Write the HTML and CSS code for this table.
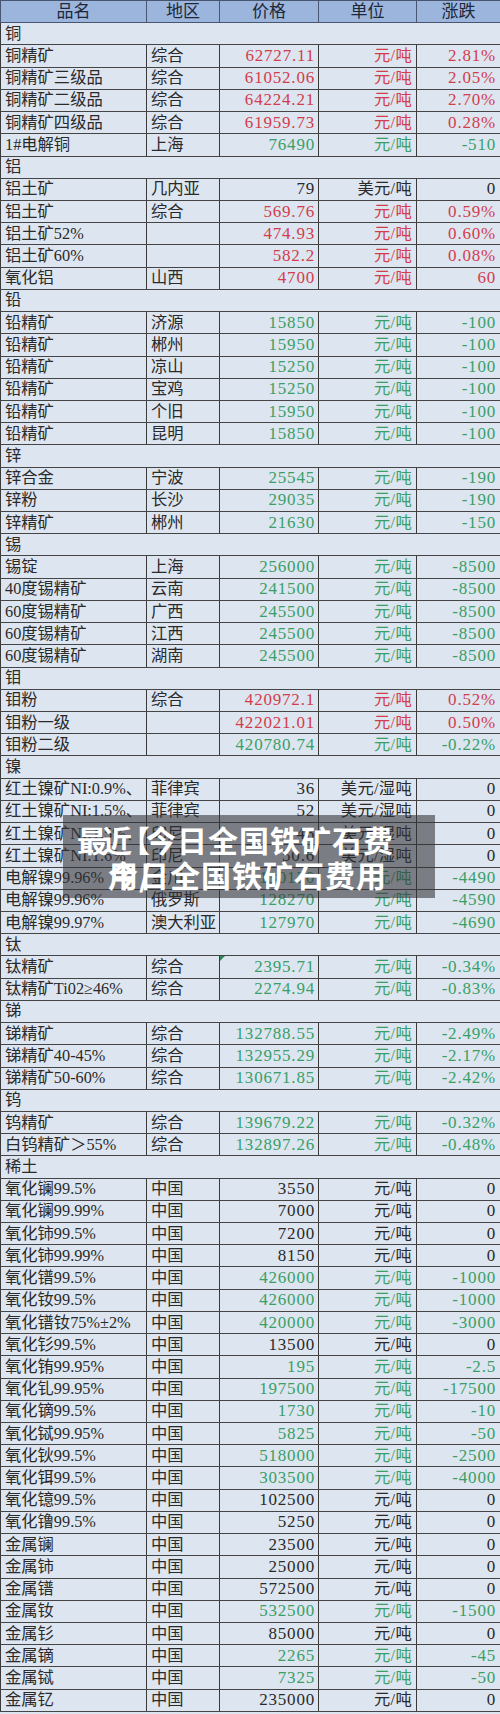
FILE: index.html
```html
<!DOCTYPE html>
<html lang="zh-CN">
<head>
<meta charset="utf-8">
<title>有色金属价格表</title>
<link rel="stylesheet" href="styles.css">
</head>
<body>
<div class="page">
<table class="prices">
<colgroup><col class="c1"><col class="c2"><col class="c3"><col class="c4"><col class="c5"></colgroup>
<thead>
<tr><th>品名</th><th>地区</th><th>价格</th><th>单位</th><th>涨跌</th></tr>
</thead>
<tbody>
<tr class="g"><td colspan="5">铜</td></tr>
<tr class="r"><td>铜精矿</td><td>综合</td><td class="n">62727.11</td><td class="u">元/吨</td><td class="n">2.81%</td></tr>
<tr class="r"><td>铜精矿三级品</td><td>综合</td><td class="n">61052.06</td><td class="u">元/吨</td><td class="n">2.05%</td></tr>
<tr class="r"><td>铜精矿二级品</td><td>综合</td><td class="n">64224.21</td><td class="u">元/吨</td><td class="n">2.70%</td></tr>
<tr class="r"><td>铜精矿四级品</td><td>综合</td><td class="n">61959.73</td><td class="u">元/吨</td><td class="n">0.28%</td></tr>
<tr class="d"><td>1#电解铜</td><td>上海</td><td class="n">76490</td><td class="u">元/吨</td><td class="n">-510</td></tr>
<tr class="g"><td colspan="5">铝</td></tr>
<tr><td>铝土矿</td><td>几内亚</td><td class="n">79</td><td class="u">美元/吨</td><td class="n">0</td></tr>
<tr class="r"><td>铝土矿</td><td>综合</td><td class="n">569.76</td><td class="u">元/吨</td><td class="n">0.59%</td></tr>
<tr class="r"><td>铝土矿52%</td><td></td><td class="n">474.93</td><td class="u">元/吨</td><td class="n">0.60%</td></tr>
<tr class="r"><td>铝土矿60%</td><td></td><td class="n">582.2</td><td class="u">元/吨</td><td class="n">0.08%</td></tr>
<tr class="r"><td>氧化铝</td><td>山西</td><td class="n">4700</td><td class="u">元/吨</td><td class="n">60</td></tr>
<tr class="g"><td colspan="5">铅</td></tr>
<tr class="d"><td>铅精矿</td><td>济源</td><td class="n">15850</td><td class="u">元/吨</td><td class="n">-100</td></tr>
<tr class="d"><td>铅精矿</td><td>郴州</td><td class="n">15950</td><td class="u">元/吨</td><td class="n">-100</td></tr>
<tr class="d"><td>铅精矿</td><td>凉山</td><td class="n">15250</td><td class="u">元/吨</td><td class="n">-100</td></tr>
<tr class="d"><td>铅精矿</td><td>宝鸡</td><td class="n">15250</td><td class="u">元/吨</td><td class="n">-100</td></tr>
<tr class="d"><td>铅精矿</td><td>个旧</td><td class="n">15950</td><td class="u">元/吨</td><td class="n">-100</td></tr>
<tr class="d"><td>铅精矿</td><td>昆明</td><td class="n">15850</td><td class="u">元/吨</td><td class="n">-100</td></tr>
<tr class="g"><td colspan="5">锌</td></tr>
<tr class="d"><td>锌合金</td><td>宁波</td><td class="n">25545</td><td class="u">元/吨</td><td class="n">-190</td></tr>
<tr class="d"><td>锌粉</td><td>长沙</td><td class="n">29035</td><td class="u">元/吨</td><td class="n">-190</td></tr>
<tr class="d"><td>锌精矿</td><td>郴州</td><td class="n">21630</td><td class="u">元/吨</td><td class="n">-150</td></tr>
<tr class="g"><td colspan="5">锡</td></tr>
<tr class="d"><td>锡锭</td><td>上海</td><td class="n">256000</td><td class="u">元/吨</td><td class="n">-8500</td></tr>
<tr class="d"><td>40度锡精矿</td><td>云南</td><td class="n">241500</td><td class="u">元/吨</td><td class="n">-8500</td></tr>
<tr class="d"><td>60度锡精矿</td><td>广西</td><td class="n">245500</td><td class="u">元/吨</td><td class="n">-8500</td></tr>
<tr class="d"><td>60度锡精矿</td><td>江西</td><td class="n">245500</td><td class="u">元/吨</td><td class="n">-8500</td></tr>
<tr class="d"><td>60度锡精矿</td><td>湖南</td><td class="n">245500</td><td class="u">元/吨</td><td class="n">-8500</td></tr>
<tr class="g"><td colspan="5">钼</td></tr>
<tr class="r"><td>钼粉</td><td>综合</td><td class="n">420972.1</td><td class="u">元/吨</td><td class="n">0.52%</td></tr>
<tr class="r"><td>钼粉一级</td><td></td><td class="n">422021.01</td><td class="u">元/吨</td><td class="n">0.50%</td></tr>
<tr class="d"><td>钼粉二级</td><td></td><td class="n">420780.74</td><td class="u">元/吨</td><td class="n">-0.22%</td></tr>
<tr class="g"><td colspan="5">镍</td></tr>
<tr><td>红土镍矿NI:0.9%、</td><td>菲律宾</td><td class="n">36</td><td class="u">美元/湿吨</td><td class="n">0</td></tr>
<tr><td>红土镍矿NI:1.5%、</td><td>菲律宾</td><td class="n">52</td><td class="u">美元/湿吨</td><td class="n">0</td></tr>
<tr><td>红土镍矿NI:1.5%、</td><td>印尼</td><td class="n">46</td><td class="u">美元/湿吨</td><td class="n">0</td></tr>
<tr><td>红土镍矿NI:1.6%</td><td>印尼</td><td class="n">50.6</td><td class="u">美元/湿吨</td><td class="n">0</td></tr>
<tr class="d"><td>电解镍99.96%</td><td>金川</td><td class="n">130120</td><td class="u">元/吨</td><td class="n">-4490</td></tr>
<tr class="d"><td>电解镍99.96%</td><td>俄罗斯</td><td class="n">128270</td><td class="u">元/吨</td><td class="n">-4590</td></tr>
<tr class="d"><td>电解镍99.97%</td><td>澳大利亚</td><td class="n">127970</td><td class="u">元/吨</td><td class="n">-4690</td></tr>
<tr class="g"><td colspan="5">钛</td></tr>
<tr class="d"><td>钛精矿</td><td>综合</td><td class="n flag">2395.71</td><td class="u">元/吨</td><td class="n">-0.34%</td></tr>
<tr class="d"><td>钛精矿Ti02≥46%</td><td>综合</td><td class="n">2274.94</td><td class="u">元/吨</td><td class="n">-0.83%</td></tr>
<tr class="g"><td colspan="5">锑</td></tr>
<tr class="d"><td>锑精矿</td><td>综合</td><td class="n">132788.55</td><td class="u">元/吨</td><td class="n">-2.49%</td></tr>
<tr class="d"><td>锑精矿40-45%</td><td>综合</td><td class="n">132955.29</td><td class="u">元/吨</td><td class="n">-2.17%</td></tr>
<tr class="d"><td>锑精矿50-60%</td><td>综合</td><td class="n">130671.85</td><td class="u">元/吨</td><td class="n">-2.42%</td></tr>
<tr class="g"><td colspan="5">钨</td></tr>
<tr class="d"><td>钨精矿</td><td>综合</td><td class="n">139679.22</td><td class="u">元/吨</td><td class="n">-0.32%</td></tr>
<tr class="d"><td>白钨精矿＞55%</td><td>综合</td><td class="n">132897.26</td><td class="u">元/吨</td><td class="n">-0.48%</td></tr>
<tr class="g"><td colspan="5">稀土</td></tr>
<tr><td>氧化镧99.5%</td><td>中国</td><td class="n">3550</td><td class="u">元/吨</td><td class="n">0</td></tr>
<tr><td>氧化镧99.99%</td><td>中国</td><td class="n">7000</td><td class="u">元/吨</td><td class="n">0</td></tr>
<tr><td>氧化铈99.5%</td><td>中国</td><td class="n">7200</td><td class="u">元/吨</td><td class="n">0</td></tr>
<tr><td>氧化铈99.99%</td><td>中国</td><td class="n">8150</td><td class="u">元/吨</td><td class="n">0</td></tr>
<tr class="d"><td>氧化镨99.5%</td><td>中国</td><td class="n">426000</td><td class="u">元/吨</td><td class="n">-1000</td></tr>
<tr class="d"><td>氧化钕99.5%</td><td>中国</td><td class="n">426000</td><td class="u">元/吨</td><td class="n">-1000</td></tr>
<tr class="d"><td>氧化镨钕75%±2%</td><td>中国</td><td class="n">420000</td><td class="u">元/吨</td><td class="n">-3000</td></tr>
<tr><td>氧化钐99.5%</td><td>中国</td><td class="n">13500</td><td class="u">元/吨</td><td class="n">0</td></tr>
<tr class="d"><td>氧化铕99.95%</td><td>中国</td><td class="n">195</td><td class="u">元/吨</td><td class="n">-2.5</td></tr>
<tr class="d"><td>氧化钆99.95%</td><td>中国</td><td class="n">197500</td><td class="u">元/吨</td><td class="n">-17500</td></tr>
<tr class="d"><td>氧化镝99.5%</td><td>中国</td><td class="n">1730</td><td class="u">元/吨</td><td class="n">-10</td></tr>
<tr class="d"><td>氧化铽99.95%</td><td>中国</td><td class="n">5825</td><td class="u">元/吨</td><td class="n">-50</td></tr>
<tr class="d"><td>氧化钬99.5%</td><td>中国</td><td class="n">518000</td><td class="u">元/吨</td><td class="n">-2500</td></tr>
<tr class="d"><td>氧化铒99.5%</td><td>中国</td><td class="n">303500</td><td class="u">元/吨</td><td class="n">-4000</td></tr>
<tr><td>氧化镱99.5%</td><td>中国</td><td class="n">102500</td><td class="u">元/吨</td><td class="n">0</td></tr>
<tr><td>氧化镥99.5%</td><td>中国</td><td class="n">5250</td><td class="u">元/吨</td><td class="n">0</td></tr>
<tr><td>金属镧</td><td>中国</td><td class="n">23500</td><td class="u">元/吨</td><td class="n">0</td></tr>
<tr><td>金属铈</td><td>中国</td><td class="n">25000</td><td class="u">元/吨</td><td class="n">0</td></tr>
<tr><td>金属镨</td><td>中国</td><td class="n">572500</td><td class="u">元/吨</td><td class="n">0</td></tr>
<tr class="d"><td>金属钕</td><td>中国</td><td class="n">532500</td><td class="u">元/吨</td><td class="n">-1500</td></tr>
<tr><td>金属钐</td><td>中国</td><td class="n">85000</td><td class="u">元/吨</td><td class="n">0</td></tr>
<tr class="d"><td>金属镝</td><td>中国</td><td class="n">2265</td><td class="u">元/吨</td><td class="n">-45</td></tr>
<tr class="d"><td>金属铽</td><td>中国</td><td class="n">7325</td><td class="u">元/吨</td><td class="n">-50</td></tr>
<tr><td>金属钇</td><td>中国</td><td class="n">235000</td><td class="u">元/吨</td><td class="n">0</td></tr>
</tbody>
</table>
<div class="caption">
  <div class="line1"><span class="tight">最近</span><span class="br">【</span>今日全国铁矿石费</div>
  <div class="line2"><span class="ghost">用/</span>今日全国铁矿石费用</div>
</div>
</div>
</body>
</html>
```
FILE: styles.css
```css
html, body {
  margin: 0;
  padding: 0;
  background: #dde5f0;
}

.page {
  position: relative;
  width: 500px;
}

.prices {
  width: 500px;
  table-layout: fixed;
  border-collapse: collapse;
  font-family: "Liberation Serif", "Noto Sans CJK SC", serif;
  font-size: 16.3px;
  color: #2a2a2a;
  background: #dde5f0;
}

.c1 { width: 146px; }
.c2 { width: 73px; }
.c3 { width: 99px; }
.c4 { width: 98px; }
.c5 { width: 84px; }

.prices tr {
  height: 22.23px;
}

.prices th {
  background: #9cb5dd;
  font-weight: 400;
  font-size: 17px;
  color: #1e2838;
  text-align: center;
  padding: 0;
  border: 1px solid #4a5670;
  line-height: 20px;
}

.prices td {
  padding: 0 4px;
  border-top: 1px solid #454545;
  border-bottom: 1px solid #454545;
  border-left: 1px solid #3a3a3a;
  border-right: 1px solid #3a3a3a;
  white-space: nowrap;
  overflow: hidden;
  line-height: 20px;
  text-align: left;
}

.prices td:nth-child(4),
.prices td:nth-child(5) {
  border-left-color: #858585;
}

.prices td.n {
  text-align: right;
  font-size: 17px;
  letter-spacing: 0.8px;
  padding-right: 3px;
}

.prices td:nth-child(5).n {
  padding-right: 4px;
}

.prices td.u {
  text-align: right;
  padding-right: 4px;
  letter-spacing: 0.3px;
}

.prices tr.g td {
  padding-left: 4px;
}

.prices tr.r td.n,
.prices tr.r td.u {
  color: #d23d4b;
}

.prices tr.d td.n,
.prices tr.d td.u {
  color: #3a9f67;
}

.prices td.flag {
  position: relative;
}

.prices td.flag::before {
  content: "";
  position: absolute;
  left: 0;
  top: 0;
  border-top: 5px solid #2e8b57;
  border-right: 5px solid transparent;
}

.caption {
  position: absolute;
  left: 63px;
  top: 815px;
  width: 372px;
  height: 83px;
  box-sizing: border-box;
  padding: 7px 0 0 14px;
  background: rgba(50, 50, 54, 0.58);
  color: #ffffff;
  font-family: "Noto Sans CJK SC", sans-serif;
  font-weight: 700;
  font-size: 30px;
  line-height: 35px;
  letter-spacing: 1px;
  white-space: nowrap;
}

.line1 .tight {
  letter-spacing: -5px;
}

.line1 .br {
  letter-spacing: 0;
  margin-left: -7px;
  margin-right: -4px;
}

.line2 {
  position: relative;
  margin-left: 31px;
}

.line2 .ghost {
  position: absolute;
  left: 0;
  top: 0;
}
```
